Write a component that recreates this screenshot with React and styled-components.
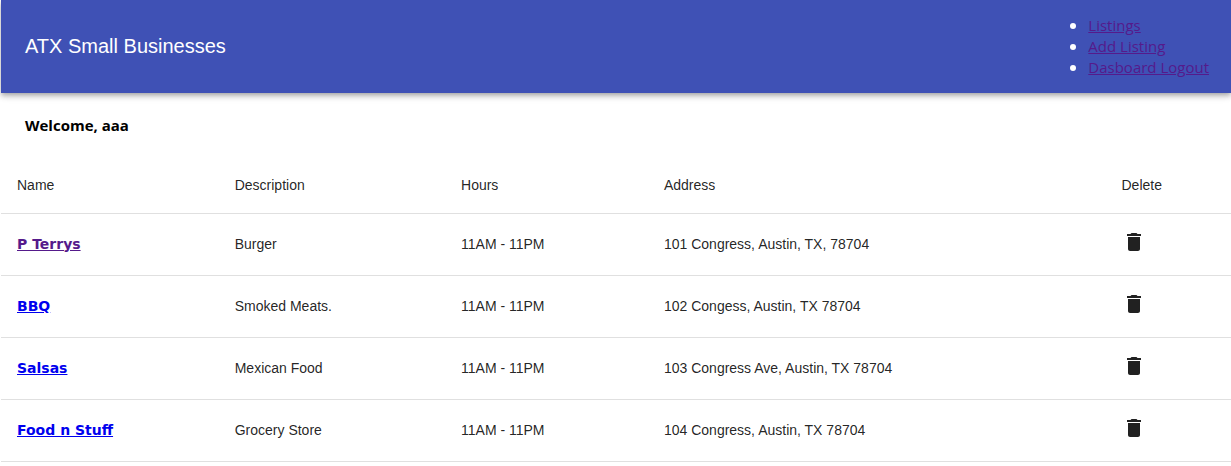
import React from "react";
import styled, { createGlobalStyle } from "styled-components";

const Global = createGlobalStyle`
  body { margin: 0; background: #fff; font-family: "Open Sans", "Noto Sans", sans-serif; font-size: 16px; color: #000; }
`;
const Page = styled.div`
  padding-left: 1px;
`;
const AppBar = styled.header`
  display: flex;
  align-items: center;
  justify-content: space-between;
  padding: 15px 22px 15px 24px;
  background: #3f51b5;
  color: #fff;
  box-shadow: 0 2px 4px -1px rgba(0,0,0,.2), 0 4px 5px 0 rgba(0,0,0,.14), 0 1px 10px 0 rgba(0,0,0,.12);
`;
const Title = styled.h1`
  margin: 0;
  padding-bottom: 2px;
  font: 400 20px/32px "Liberation Sans", Arial, sans-serif;
`;
const NavList = styled.ul`
  margin: 0;
  padding: 0;
  line-height: 21px;
`;
const NavLink = styled.a`
  color: #551a8b;
  font-size: 15px;
`;
const Welcome = styled.h2`
  margin: 0;
  padding: 21px 24px;
  font-size: 15px;
  line-height: 22px;
  font-weight: 700;
`;
const Table = styled.table`
  width: 100%;
  border-collapse: collapse;
  table-layout: fixed;
  font: 400 14px/20px "Liberation Sans", Arial, sans-serif;
  color: rgba(0,0,0,.87);
`;
const Col = styled.col`
  width: ${(p) => p.$width};
`;
const HeadCell = styled.th`
  height: 24px;
  padding: 16px;
  text-align: left;
  font-weight: 400;
  border-bottom: 1px solid #e0e0e0;
`;
const Cell = styled.td`
  height: 29px;
  padding: 15px 16px 17px;
  border-bottom: 1px solid #e0e0e0;
`;
const ListingLink = styled.a`
  font-family: "Arial Black", "DejaVu Sans", sans-serif;
  font-weight: 900;
  color: ${(p) => (p.$visited ? "#551a8b" : "#0000ee")};
`;
const DeleteButton = styled.button`
  display: block;
  margin: 0;
  padding: 0 0 4px;
  border: 0;
  background: none;
  color: inherit;
  cursor: pointer;
`;
const Icon = styled.svg`
  display: block;
  width: 24px;
  height: 24px;
  fill: currentColor;
`;

const links = ["Listings", "Add Listing", "Dasboard Logout"];
const columns = [["Name", "17.7%"], ["Description", "18.4%"], ["Hours", "16.5%"], ["Address", "37.2%"], ["Delete", "auto"]];
const listings = [
  { name: "P Terrys", description: "Burger", hours: "11AM - 11PM", address: "101 Congress, Austin, TX, 78704", visited: true },
  { name: "BBQ", description: "Smoked Meats.", hours: "11AM - 11PM", address: "102 Congess, Austin, TX 78704" },
  { name: "Salsas", description: "Mexican Food", hours: "11AM - 11PM", address: "103 Congress Ave, Austin, TX 78704" },
  { name: "Food n Stuff", description: "Grocery Store", hours: "11AM - 11PM", address: "104 Congress, Austin, TX 78704" },
];

export default function App() {
  return (
    <Page>
      <Global />
      <AppBar>
        <Title>ATX Small Businesses</Title>
        <nav>
          <NavList>
            {links.map((l) => <li key={l}><NavLink href="#">{l}</NavLink></li>)}
          </NavList>
        </nav>
      </AppBar>
      <main>
        <Welcome>Welcome, aaa</Welcome>
        <Table>
          <colgroup>{columns.map(([n, w]) => <Col key={n} $width={w} />)}</colgroup>
          <thead>
            <tr>{columns.map(([n]) => <HeadCell key={n} scope="col">{n}</HeadCell>)}</tr>
          </thead>
          <tbody>
            {listings.map((l) => (
              <tr key={l.name}>
                <Cell><ListingLink href="#" $visited={l.visited}>{l.name}</ListingLink></Cell>
                <Cell>{l.description}</Cell>
                <Cell>{l.hours}</Cell>
                <Cell>{l.address}</Cell>
                <Cell>
                  <DeleteButton type="button" aria-label={`Delete ${l.name}`}>
                    <Icon viewBox="0 0 24 24"><path d="M6 19c0 1.100.9 2 2 2h8c1.100 0 2-.9 2-2V7H6v12zM19 4h-3.500l-1-1h-5l-1 1H5v2h14V4z" /></Icon>
                  </DeleteButton>
                </Cell>
              </tr>
            ))}
          </tbody>
        </Table>
      </main>
    </Page>
  );
}
